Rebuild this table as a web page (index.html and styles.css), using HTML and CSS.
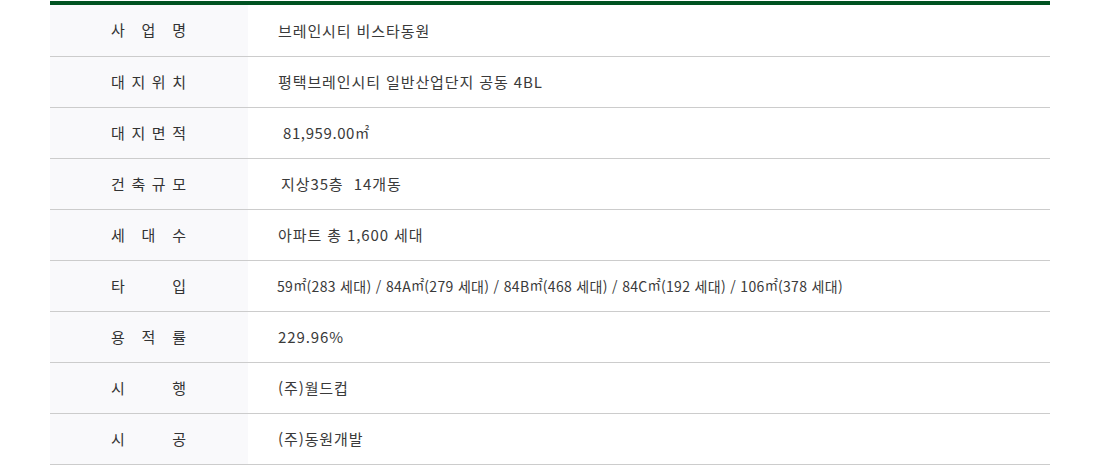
FILE: index.html
```html
<!DOCTYPE html>
<html lang="ko">
<head>
<meta charset="utf-8">
<title>사업개요</title>
<link rel="stylesheet" href="styles.css">
</head>
<body>
<div class="overview">
  <div class="row first"><div class="label"><span>사</span><span>업</span><span>명</span></div><div class="value">브레인시티 비스타동원</div></div>
  <div class="row"><div class="label"><span>대</span><span>지</span><span>위</span><span>치</span></div><div class="value">평택브레인시티 일반산업단지 공동 4BL</div></div>
  <div class="row"><div class="label"><span>대</span><span>지</span><span>면</span><span>적</span></div><div class="value indent5">81,959.00<span class="unit">㎡</span></div></div>
  <div class="row"><div class="label"><span>건</span><span>축</span><span>규</span><span>모</span></div><div class="value indent3">지상35층&nbsp;&nbsp;14개동</div></div>
  <div class="row"><div class="label"><span>세</span><span>대</span><span>수</span></div><div class="value">아파트 총 1,600 세대</div></div>
  <div class="row"><div class="label"><span>타</span><span>입</span></div><div class="value small">59<span class="unit">㎡</span>(283 세대) / 84A<span class="unit">㎡</span>(279 세대) / 84B<span class="unit">㎡</span>(468 세대) / 84C<span class="unit">㎡</span>(192 세대) / 106<span class="unit">㎡</span>(378 세대)</div></div>
  <div class="row"><div class="label"><span>용</span><span>적</span><span>률</span></div><div class="value">229.96%</div></div>
  <div class="row"><div class="label"><span>시</span><span>행</span></div><div class="value">(주)월드컵</div></div>
  <div class="row"><div class="label"><span>시</span><span>공</span></div><div class="value">(주)동원개발</div></div>
</div>
</body>
</html>
```
FILE: styles.css
```css
html, body {
  margin: 0;
  padding: 0;
  background: #ffffff;
}
body {
  font-family: "Noto Sans CJK KR", "Noto Sans", sans-serif;
  color: #333333;
  padding-top: 1px;
}
.overview {
  width: 1000px;
  margin-left: 50px;
  border-top: 4px solid #005221;
}
.row {
  display: flex;
  height: 50px;
  border-bottom: 1px solid #cccccc;
}
.row.first {
  height: 51px;
}
.label {
  width: 198px;
  flex: none;
  box-sizing: border-box;
  padding: 0 62px 2px 61px;
  background: #f9f9fb;
  display: flex;
  align-items: center;
  justify-content: space-between;
  font-size: 15px;
  color: #333333;
}
.value {
  display: flex;
  align-items: center;
  padding-left: 30px;
  padding-bottom: 1px;
  font-size: 15px;
  letter-spacing: 0.9px;
  color: #3a3a3a;
  white-space: pre;
}
.unit {
  font-size: 0.95em;
  letter-spacing: 0;
  position: relative;
  top: -1px;
}
.value.indent5 { padding-left: 35px; letter-spacing: 0.6px; }
.value.indent3 { padding-left: 33px; }
.value.small {
  font-size: 14px;
  letter-spacing: 0.33px;
  padding-left: 29px;
}
```
